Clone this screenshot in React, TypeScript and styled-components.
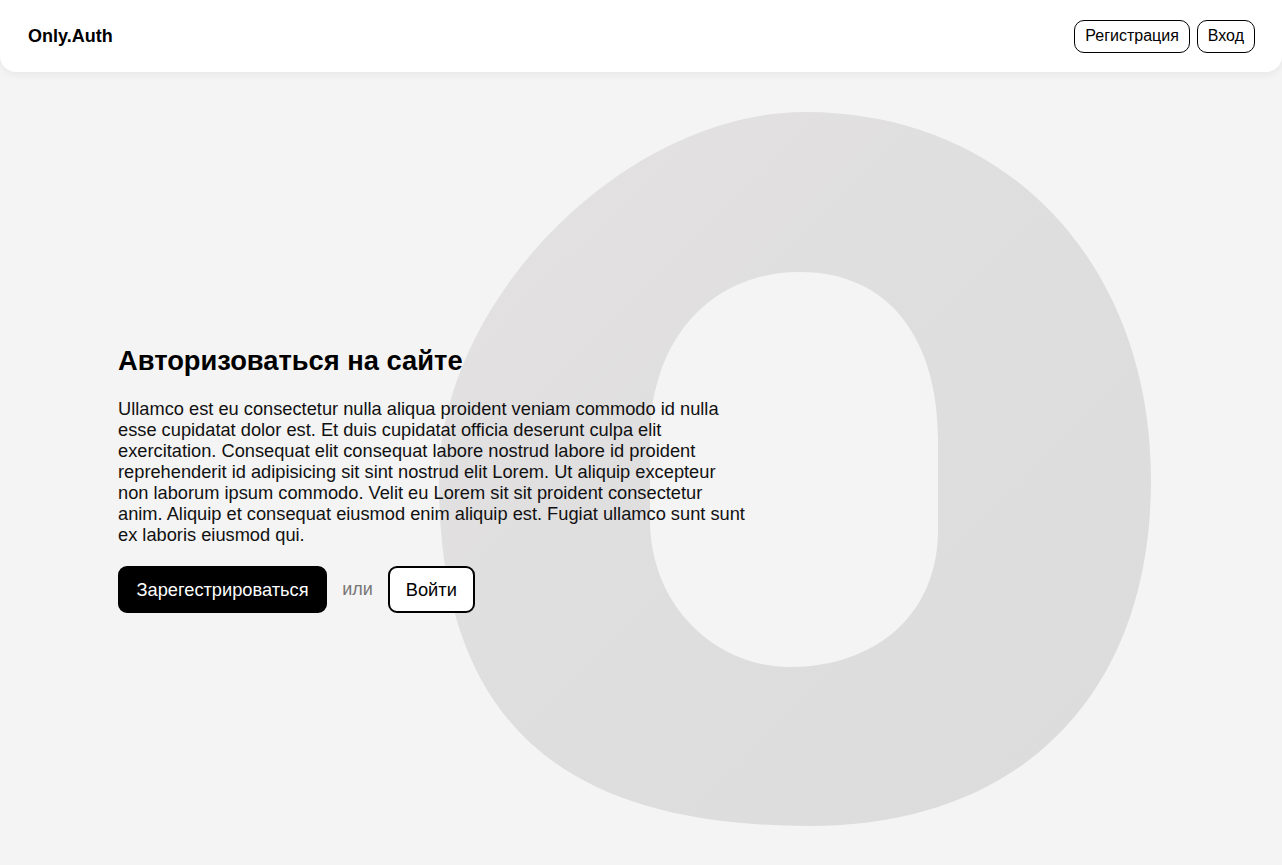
import React from "react";
import styled, { createGlobalStyle } from "styled-components";

const GlobalStyle = createGlobalStyle`
  * { box-sizing: border-box; }
  html, body { margin: 0; padding: 0; }
  body {
    background: #f4f4f4;
    font-family: "Liberation Sans", Arial, sans-serif;
    color: #000;
  }
`;

const Page = styled.div`
  position: relative;
  min-height: 100vh;
  overflow: hidden;
  background: #f4f4f4;
`;

const Backdrop = styled.svg`
  position: absolute;
  left: 0;
  top: 0;
  width: 1282px;
  height: 865px;
  pointer-events: none;
  z-index: 0;
`;

const Header = styled.header`
  position: relative;
  z-index: 2;
  height: 72px;
  display: flex;
  align-items: center;
  justify-content: space-between;
  padding: 0 27px 0 28px;
  background: #fff;
  border-radius: 0 0 16px 16px;
  box-shadow: 0 2px 8px rgba(0, 0, 0, 0.06);
`;

const Logo = styled.div`
  font-size: 18px;
  font-weight: 700;
`;

const Nav = styled.nav`
  display: flex;
  gap: 7px;
`;

const NavButton = styled.button`
  height: 33px;
  padding: 0 10px;
  border: 1px solid #000;
  border-radius: 10px;
  background: #fff;
  color: #000;
  font-family: inherit;
  font-size: 16px;
  cursor: pointer;
`;

const Main = styled.main`
  position: relative;
  z-index: 1;
  padding: 273px 0 0 118px;
`;

const Title = styled.h1`
  margin: 0;
  font-size: 27.3px;
  line-height: 31px;
  font-weight: 700;
`;

const Text = styled.p`
  width: 629px;
  margin: 22px 0 0;
  font-size: 18.25px;
  line-height: 21px;
  color: #111;
`;

const Actions = styled.div`
  display: flex;
  align-items: center;
  gap: 15px;
  margin-top: 21px;
`;

const ActionButton = styled.button<{ $primary?: boolean }>`
  height: 47px;
  padding: 0 ${(p) => (p.$primary ? "16.5px" : "16px")};
  border: 2px solid #000;
  border-radius: 9px;
  background: ${(p) => (p.$primary ? "#000" : "#fff")};
  color: ${(p) => (p.$primary ? "#fff" : "#000")};
  font-family: inherit;
  font-size: 18.25px;
  cursor: pointer;
`;

const Or = styled.span`
  font-size: 18px;
  color: #777;
`;

const outer =
  "M 805 112 C 1008 112 1151 264 1151 480 C 1151 694 1021 826 810 826 C 556 826 439 717 439 480 C 439 300 626 112 805 112 Z";
const inner =
  "M 800 272 C 890 272 938 340 938 440 L 938 530 C 938 615 875 667 790 667 C 715 667 650 605 650 520 L 650 440 C 650 340 710 272 800 272 Z";

export default function App() {
  return (
    <>
      <GlobalStyle />
      <Page>
        <Backdrop viewBox="0 0 1282 865" aria-hidden="true">
          <defs>
            <linearGradient id="og" x1="0" y1="0" x2="1" y2="1">
              <stop offset="0" stopColor="#e4e2e3" />
              <stop offset="0.5" stopColor="#dfdedf" />
              <stop offset="1" stopColor="#dcdcdc" />
            </linearGradient>
          </defs>
          <path d={`${outer} ${inner}`} fill="url(#og)" fillRule="evenodd" />
        </Backdrop>
        <Header>
          <Logo>Only.Auth</Logo>
          <Nav>
            <NavButton>Регистрация</NavButton>
            <NavButton>Вход</NavButton>
          </Nav>
        </Header>
        <Main>
          <Title>Авторизоваться на сайте</Title>
          <Text>
            Ullamco est eu consectetur nulla aliqua proident veniam commodo id
            nulla esse cupidatat dolor est. Et duis cupidatat officia deserunt
            culpa elit exercitation. Consequat elit consequat labore nostrud
            labore id proident reprehenderit id adipisicing sit sint nostrud
            elit Lorem. Ut aliquip excepteur non laborum ipsum commodo. Velit eu
            Lorem sit sit proident consectetur anim. Aliquip et consequat
            eiusmod enim aliquip est. Fugiat ullamco sunt sunt ex laboris
            eiusmod qui.
          </Text>
          <Actions>
            <ActionButton $primary>Зарегестрироваться</ActionButton>
            <Or>или</Or>
            <ActionButton>Войти</ActionButton>
          </Actions>
        </Main>
      </Page>
    </>
  );
}
